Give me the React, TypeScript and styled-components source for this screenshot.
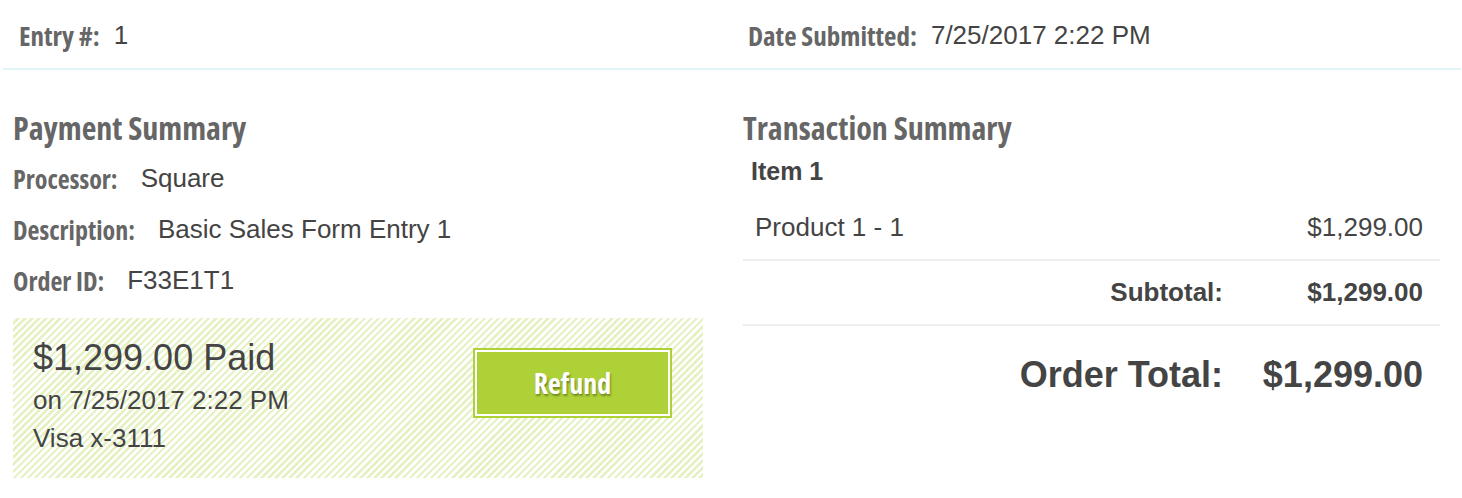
import React from "react";
import styled, { createGlobalStyle } from "styled-components";

const Global = createGlobalStyle`
  html, body { margin: 0; padding: 0; background: #fff; }
  body { font-family: "Liberation Sans", Arial, sans-serif; color: #444; }
`;

const Page = styled.div`
  width: 1462px;
  height: 498px;
  overflow: hidden;
`;

const Header = styled.div`
  margin: 0 1px 0 3px;
  height: 70px;
  padding-top: 3px;
  box-sizing: border-box;
  display: grid;
  grid-template-columns: 1fr 1fr;
  border-bottom: 2px solid #e1f5f8;
`;

const HeaderCell = styled.div`
  display: flex;
  align-items: center;
  padding-left: 16px;
  gap: 14px;
`;

const Label = styled.span<{ $size?: number }>`
  font-family: "Open Sans", sans-serif;
  font-stretch: 75%;
  font-weight: 700;
  font-size: ${(p) => p.$size ?? 26}px;
  color: #666;
`;

const Value = styled.span`
  font-family: "Liberation Sans", Arial, sans-serif;
  font-size: 26px;
  color: #444;
`;

const Body = styled.div`
  display: grid;
  grid-template-columns: 690px 697px;
  column-gap: 40px;
  padding-left: 13px;
`;

const Column = styled.div`
  display: flex;
  flex-direction: column;
`;

const Heading = styled.h2`
  margin: 0;
  height: 44px;
  padding-top: 39px;
  font-family: "Open Sans", sans-serif;
  font-stretch: 75%;
  font-weight: 700;
  font-size: 32px;
  line-height: 38px;
  color: #666;
`;

const InfoRow = styled.div`
  height: 51px;
  display: flex;
  align-items: center;
  gap: 23px;
`;

const PaidBox = styled.div`
  margin-top: 12px;
  height: 160px;
  box-sizing: border-box;
  padding: 17px 31px 0 20px;
  display: flex;
  justify-content: space-between;
  align-items: flex-start;
  background: repeating-linear-gradient(
    135deg,
    #ffffff 0px,
    #ffffff 2.5px,
    #e6f2c6 2.5px,
    #e6f2c6 5px
  );
`;

const PaidInfo = styled.div`
  display: flex;
  flex-direction: column;
  color: #444;
`;

const PaidAmount = styled.div`
  font-size: 36px;
  line-height: 46px;
`;

const PaidLine = styled.div`
  font-size: 26px;
  line-height: 38px;
`;

const RefundButton = styled.button`
  margin-top: 15px;
  margin-right: 2px;
  width: 195px;
  height: 66px;
  box-sizing: border-box;
  background: #add136;
  border: 2px solid #fff;
  box-shadow: 0 0 0 2px #add136;
  outline: none;
  padding: 0;
  font-family: "Open Sans", sans-serif;
  font-stretch: 75%;
  font-weight: 700;
  font-size: 28px;
  color: #fff;
  text-shadow: 1px 2px 2px rgba(0, 0, 0, 0.35);
  cursor: pointer;
`;

const ItemTitle = styled.div`
  height: 36px;
  padding-left: 8px;
  display: flex;
  align-items: center;
  font-weight: 700;
  font-size: 25px;
  color: #444;
`;

const TableRow = styled.div<{ $bold?: boolean; $big?: boolean; $h: number; $top?: number; $border?: boolean }>`
  height: ${(p) => p.$h}px;
  box-sizing: border-box;
  display: flex;
  align-items: center;
  padding: ${(p) => p.$top ?? 0}px 17px 0 12px;
  border-bottom: ${(p) => (p.$border ? "2px solid #eeeeee" : "none")};
  font-weight: ${(p) => (p.$bold ? 700 : 400)};
  font-size: ${(p) => (p.$big ? 36 : 26)}px;
  color: #444;
`;

const Cell = styled.div<{ $grow?: boolean; $w?: number }>`
  flex: ${(p) => (p.$grow ? 1 : "none")};
  width: ${(p) => (p.$w ? `${p.$w}px` : "auto")};
  text-align: ${(p) => (p.$grow ? "left" : "right")};
  white-space: nowrap;
`;

export default function App() {
  return (
    <Page>
      <Global />
      <Header>
        <HeaderCell>
          <Label $size={27}>Entry #:</Label>
          <Value>1</Value>
        </HeaderCell>
        <HeaderCell>
          <Label $size={27}>Date Submitted:</Label>
          <Value>7/25/2017 2:22 PM</Value>
        </HeaderCell>
      </Header>
      <Body>
        <Column>
          <Heading>Payment Summary</Heading>
          <InfoRow>
            <Label>Processor:</Label>
            <Value>Square</Value>
          </InfoRow>
          <InfoRow>
            <Label>Description:</Label>
            <Value>Basic Sales Form Entry 1</Value>
          </InfoRow>
          <InfoRow>
            <Label>Order ID:</Label>
            <Value>F33E1T1</Value>
          </InfoRow>
          <PaidBox>
            <PaidInfo>
              <PaidAmount>$1,299.00 Paid</PaidAmount>
              <PaidLine>on 7/25/2017 2:22 PM</PaidLine>
              <PaidLine>Visa x-3111</PaidLine>
            </PaidInfo>
            <RefundButton>Refund</RefundButton>
          </PaidBox>
        </Column>
        <Column>
          <Heading>Transaction Summary</Heading>
          <ItemTitle>Item 1</ItemTitle>
          <TableRow $h={72} $top={6} $border>
            <Cell $grow>Product 1 - 1</Cell>
            <Cell>$1,299.00</Cell>
          </TableRow>
          <TableRow $h={65} $bold $border>
            <Cell $grow />
            <Cell>Subtotal:</Cell>
            <Cell $w={200}>$1,299.00</Cell>
          </TableRow>
          <TableRow $h={98} $bold $big>
            <Cell $grow />
            <Cell>Order Total:</Cell>
            <Cell $w={200}>$1,299.00</Cell>
          </TableRow>
        </Column>
      </Body>
    </Page>
  );
}
